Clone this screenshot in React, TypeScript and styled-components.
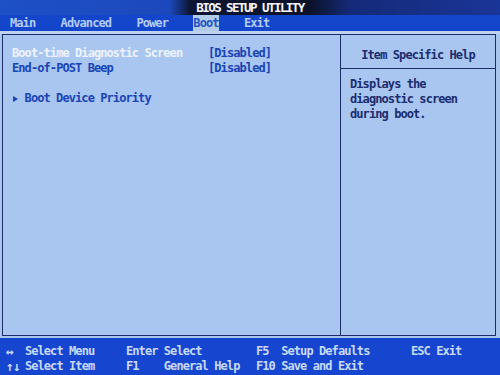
import React from "react";
import styled, { createGlobalStyle } from "styled-components";

const GlobalStyle = createGlobalStyle`
  html, body {
    margin: 0;
    padding: 0;
    background: #1646d0;
  }
  * {
    box-sizing: border-box;
  }
`;

const MENU = ["Main", "Advanced", "Power", "Boot", "Exit"];
const ACTIVE_MENU = "Boot";

const SETTINGS = [
  { label: "Boot-time Diagnostic Screen", value: "[Disabled]", selected: true },
  { label: "End-of-POST Beep", value: "[Disabled]", selected: false },
];

const KEYS = [
  [
    ["↔", "Select Menu"],
    ["Enter", "Select"],
    ["F5", "Setup Defaults"],
    ["ESC", "Exit"],
  ],
  [
    ["↑↓", "Select Item"],
    ["F1", "General Help"],
    ["F10", "Save and Exit"],
    ["", ""],
  ],
];

function App() {
  return (
    <>
      <GlobalStyle />
      <Screen>
        <TitleBar>BIOS SETUP UTILITY</TitleBar>
        <MenuBar>
          {MENU.map((item) => (
            <MenuItem key={item} $active={item === ACTIVE_MENU}>
              {item}
            </MenuItem>
          ))}
        </MenuBar>
        <Body>
          <Frame>
            <SettingsPanel>
              {SETTINGS.map((s) => (
                <SettingRow key={s.label} $selected={s.selected}>
                  <span>{s.label}</span>
                  <Value>{s.value}</Value>
                </SettingRow>
              ))}
              <Spacer />
              <SubMenuRow>
                <Arrow />
                Boot Device Priority
              </SubMenuRow>
            </SettingsPanel>
            <HelpPanel>
              <HelpHeader>Item Specific Help</HelpHeader>
              <HelpText>{"Displays the\ndiagnostic screen\nduring boot."}</HelpText>
            </HelpPanel>
          </Frame>
        </Body>
        <KeyBar>
          {KEYS.map((row, r) =>
            row.map(([key, desc], c) => (
              <KeyCell key={`${r}-${c}`}>
                <Key $col={c}>{key}</Key>
                {desc}
              </KeyCell>
            ))
          )}
        </KeyBar>
      </Screen>
    </>
  );
}

const Screen = styled.div`
  width: 500px;
  height: 375px;
  display: flex;
  flex-direction: column;
  overflow: hidden;
  font-family: "DejaVu Sans Mono", "Liberation Mono", monospace;
  font-size: 12px;
  font-weight: bold;
  letter-spacing: -0.92px;
  line-height: 15px;
`;

const TitleBar = styled.div`
  height: 15px;
  display: flex;
  align-items: center;
  justify-content: center;
  color: #f4f6ff;
  font-size: 12.5px;
  letter-spacing: -1.55px;
  background: linear-gradient(
    to right,
    #1e50c6 0%,
    #1b49bc 34%,
    #0d1533 38%,
    #0b1228 62%,
    #142a78 70%,
    #1a3598 100%
  );
`;

const MenuBar = styled.div`
  height: 16px;
  display: flex;
  align-items: stretch;
  gap: 25.4px;
  padding-left: 10px;
  background: #1446cc;
`;

const MenuItem = styled.div<{ $active: boolean }>`
  display: flex;
  align-items: center;
  color: ${(p) => (p.$active ? "#2454c4" : "#b4ccf2")};
  background: ${(p) => (p.$active ? "#b2cbe6" : "transparent")};
`;

const Body = styled.div`
  flex: 1;
  padding: 3px 4px 2px 2px;
  background: linear-gradient(to bottom, #bcd2f0 0px, #bcd2f0 3px, #a8c5ee 3px);
`;

const Frame = styled.div`
  height: 100%;
  display: grid;
  grid-template-columns: 338px 1fr;
  border: 1px solid #1c2c66;
  background: #a8c6ef;
`;

const SettingsPanel = styled.div`
  padding: 11px 9px;
  border-right: 1px solid #1c2c66;
`;

const SettingRow = styled.div<{ $selected: boolean }>`
  display: grid;
  grid-template-columns: 196px auto;
  color: ${(p) => (p.$selected ? "#eef3ff" : "#1a44b6")};
`;

const Value = styled.span`
  color: #1a44b6;
`;

const Spacer = styled.div`
  height: 15px;
`;

const SubMenuRow = styled.div`
  display: flex;
  align-items: center;
  color: #1a44b6;
`;

const Arrow = styled.span`
  width: 12.6px;
  height: 15px;
  display: inline-flex;
  align-items: center;
  &::before {
    content: "";
    width: 0;
    height: 0;
    margin-left: 1px;
    border-top: 3.5px solid transparent;
    border-bottom: 3.5px solid transparent;
    border-left: 5px solid #1a44b6;
  }
`;

const HelpPanel = styled.div`
  display: flex;
  flex-direction: column;
`;

const HelpHeader = styled.div`
  padding: 13px 0 5px;
  text-align: center;
  color: #1c2c70;
  border-bottom: 1px solid #1c2c66;
`;

const HelpText = styled.div`
  padding: 8px 9px;
  white-space: pre-line;
  color: #1c2c70;
`;

const KeyBar = styled.div`
  height: 37px;
  display: grid;
  grid-template-columns: 120px 130px 155px 1fr;
  grid-auto-rows: 15px;
  align-content: start;
  padding: 6px 0 0 6px;
  background: #1646d0;
  color: #c8daf6;
`;

const KeyCell = styled.div`
  white-space: pre;
  overflow: hidden;
`;

const Key = styled.span<{ $col: number }>`
  display: inline-block;
  vertical-align: top;
  line-height: 15px;
  width: ${(p) => ["12.6px", "37.8px", "25.2px", "25.2px"][p.$col]};
  margin-right: ${(p) => (p.$col === 0 ? "6.3px" : "0")};
  font-size: ${(p) => (p.$col === 0 ? "13px" : "inherit")};
`;

export default App;
